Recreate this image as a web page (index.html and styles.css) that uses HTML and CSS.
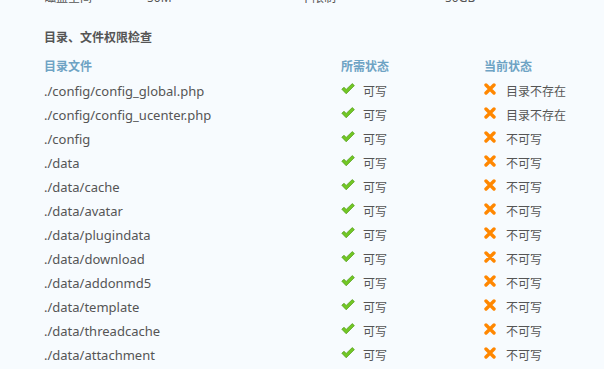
FILE: index.html
```html
<!DOCTYPE html>
<html lang="zh-CN">
<head>
<meta charset="utf-8">
<link rel="stylesheet" href="styles.css">
</head>
<body>
<div class="page">
  <div class="row prev">
    <span class="c1">磁盘空间</span><span class="c2">50M</span><span class="c3">不限制</span><span class="c4">50GB</span>
  </div>
  <h2 class="title">目录、文件权限检查</h2>
  <div class="table">
    <div class="row head"><span class="col-a">目录文件</span><span class="col-b">所需状态</span><span class="col-c">当前状态</span></div>
    <div class="row"><span class="col-a path">./config/config_global.php</span><span class="col-b"><svg class="ok" viewBox="0 0 14 12"><path d="M0.8 6.2 L3 4.3 L5.2 6.4 L11.3 0.6 L13.4 2.6 L5.2 10.8 Z"/></svg>可写</span><span class="col-c"><svg class="no" viewBox="0 0 12 12"><path d="M2 2 L10 10 M10 2 L2 10"/></svg>目录不存在</span></div>
    <div class="row"><span class="col-a path">./config/config_ucenter.php</span><span class="col-b"><svg class="ok" viewBox="0 0 14 12"><path d="M0.8 6.2 L3 4.3 L5.2 6.4 L11.3 0.6 L13.4 2.6 L5.2 10.8 Z"/></svg>可写</span><span class="col-c"><svg class="no" viewBox="0 0 12 12"><path d="M2 2 L10 10 M10 2 L2 10"/></svg>目录不存在</span></div>
    <div class="row"><span class="col-a path">./config</span><span class="col-b"><svg class="ok" viewBox="0 0 14 12"><path d="M0.8 6.2 L3 4.3 L5.2 6.4 L11.3 0.6 L13.4 2.6 L5.2 10.8 Z"/></svg>可写</span><span class="col-c"><svg class="no" viewBox="0 0 12 12"><path d="M2 2 L10 10 M10 2 L2 10"/></svg>不可写</span></div>
    <div class="row"><span class="col-a path">./data</span><span class="col-b"><svg class="ok" viewBox="0 0 14 12"><path d="M0.8 6.2 L3 4.3 L5.2 6.4 L11.3 0.6 L13.4 2.6 L5.2 10.8 Z"/></svg>可写</span><span class="col-c"><svg class="no" viewBox="0 0 12 12"><path d="M2 2 L10 10 M10 2 L2 10"/></svg>不可写</span></div>
    <div class="row"><span class="col-a path">./data/cache</span><span class="col-b"><svg class="ok" viewBox="0 0 14 12"><path d="M0.8 6.2 L3 4.3 L5.2 6.4 L11.3 0.6 L13.4 2.6 L5.2 10.8 Z"/></svg>可写</span><span class="col-c"><svg class="no" viewBox="0 0 12 12"><path d="M2 2 L10 10 M10 2 L2 10"/></svg>不可写</span></div>
    <div class="row"><span class="col-a path">./data/avatar</span><span class="col-b"><svg class="ok" viewBox="0 0 14 12"><path d="M0.8 6.2 L3 4.3 L5.2 6.4 L11.3 0.6 L13.4 2.6 L5.2 10.8 Z"/></svg>可写</span><span class="col-c"><svg class="no" viewBox="0 0 12 12"><path d="M2 2 L10 10 M10 2 L2 10"/></svg>不可写</span></div>
    <div class="row"><span class="col-a path">./data/plugindata</span><span class="col-b"><svg class="ok" viewBox="0 0 14 12"><path d="M0.8 6.2 L3 4.3 L5.2 6.4 L11.3 0.6 L13.4 2.6 L5.2 10.8 Z"/></svg>可写</span><span class="col-c"><svg class="no" viewBox="0 0 12 12"><path d="M2 2 L10 10 M10 2 L2 10"/></svg>不可写</span></div>
    <div class="row"><span class="col-a path">./data/download</span><span class="col-b"><svg class="ok" viewBox="0 0 14 12"><path d="M0.8 6.2 L3 4.3 L5.2 6.4 L11.3 0.6 L13.4 2.6 L5.2 10.8 Z"/></svg>可写</span><span class="col-c"><svg class="no" viewBox="0 0 12 12"><path d="M2 2 L10 10 M10 2 L2 10"/></svg>不可写</span></div>
    <div class="row"><span class="col-a path">./data/addonmd5</span><span class="col-b"><svg class="ok" viewBox="0 0 14 12"><path d="M0.8 6.2 L3 4.3 L5.2 6.4 L11.3 0.6 L13.4 2.6 L5.2 10.8 Z"/></svg>可写</span><span class="col-c"><svg class="no" viewBox="0 0 12 12"><path d="M2 2 L10 10 M10 2 L2 10"/></svg>不可写</span></div>
    <div class="row"><span class="col-a path">./data/template</span><span class="col-b"><svg class="ok" viewBox="0 0 14 12"><path d="M0.8 6.2 L3 4.3 L5.2 6.4 L11.3 0.6 L13.4 2.6 L5.2 10.8 Z"/></svg>可写</span><span class="col-c"><svg class="no" viewBox="0 0 12 12"><path d="M2 2 L10 10 M10 2 L2 10"/></svg>不可写</span></div>
    <div class="row"><span class="col-a path">./data/threadcache</span><span class="col-b"><svg class="ok" viewBox="0 0 14 12"><path d="M0.8 6.2 L3 4.3 L5.2 6.4 L11.3 0.6 L13.4 2.6 L5.2 10.8 Z"/></svg>可写</span><span class="col-c"><svg class="no" viewBox="0 0 12 12"><path d="M2 2 L10 10 M10 2 L2 10"/></svg>不可写</span></div>
    <div class="row"><span class="col-a path">./data/attachment</span><span class="col-b"><svg class="ok" viewBox="0 0 14 12"><path d="M0.8 6.2 L3 4.3 L5.2 6.4 L11.3 0.6 L13.4 2.6 L5.2 10.8 Z"/></svg>可写</span><span class="col-c"><svg class="no" viewBox="0 0 12 12"><path d="M2 2 L10 10 M10 2 L2 10"/></svg>不可写</span></div>
  </div>
</div>
</body>
</html>
```
FILE: styles.css
```css
html, body {
  margin: 0;
  padding: 0;
  background: #f7fbfe;
  height: 100%;
  overflow: hidden;
}
body {
  font-family: "Noto Sans", "Noto Sans CJK SC", sans-serif;
  font-size: 12px;
  color: #555;
}
.page {
  padding: 0 0 0 44px;
  margin-top: -15px;
}
.row {
  display: flex;
  align-items: center;
  height: 24px;
  white-space: nowrap;
}
.prev .c1 { width: 103px; }
.prev .c2 { width: 153px; }
.prev .c3 { width: 145px; }
.title {
  margin: 0;
  font-size: 12px;
  font-weight: bold;
  color: #555;
  height: 24px;
  line-height: 24px;
  margin-top: 17px;
}
.table { margin-top: 4px; }
.col-a { width: 297px; }
.path { font-size: 13px; }
.col-b { width: 143px; display: flex; align-items: center; }
.col-c { display: flex; align-items: center; }
.head { color: #6ea3c4; font-weight: bold; margin-bottom: 1px; }
.ok {
  width: 14px;
  height: 12px;
  margin-right: 8px;
  margin-top: -5px;
  fill: #72c725;
  stroke: #4e9a12;
  stroke-width: 0.7;
  stroke-linejoin: round;
}
.no {
  width: 12px;
  height: 12px;
  margin-right: 10px;
  margin-top: -5px;
  fill: none;
  stroke: #ff8700;
  stroke-width: 3.4;
  stroke-linecap: round;
}
```
